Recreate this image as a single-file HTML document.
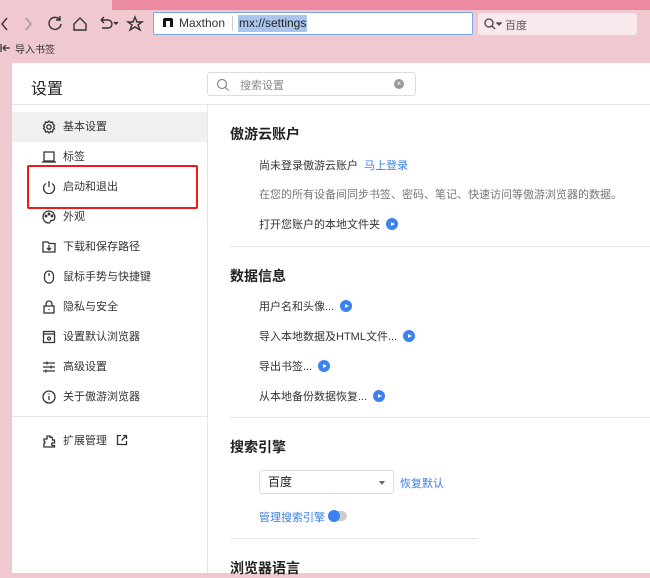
<!DOCTYPE html>
<html><head><meta charset="utf-8"><style>
*{margin:0;padding:0;box-sizing:border-box}
body{width:650px;height:573px;overflow:hidden;background:#f0c8cf;font-family:"Liberation Sans","Noto Sans CJK SC",sans-serif;position:relative;color:#222}
.a{position:absolute}
.page{left:12px;top:63px;width:638px;height:510px;background:#fff}
.side .it{position:absolute;left:0;width:195px;height:30px;font-size:11px;line-height:30px;padding-left:51px;color:#333}
.side svg{position:absolute;left:30px;top:8px}
.h{font-size:14px;font-weight:bold;color:#222;left:230px}
.t{font-size:11px;color:#333;left:259px}
.g{color:#777}
.blue{color:#3b7fe0}
.play{display:inline-block;width:12px;height:12px;border-radius:50%;background:#3b82f0;vertical-align:-2px;margin-left:6px;position:relative}
.play:after{content:"";position:absolute;left:5px;top:3.5px;border-left:4px solid #fff;border-top:2.5px solid transparent;border-bottom:2.5px solid transparent}
.hr{height:1px;background:#e6e6e6}
</style></head><body>
<div class="a" style="left:112px;top:0;width:538px;height:10px;background:#eb8aa1"></div>
<svg class="a" style="left:0;top:12px" width="150" height="24" fill="none" stroke="#333" stroke-width="1.4">
<path d="M7 6l-5 6 5 6"/>
<path d="M26 6l5 6-5 6" stroke="#999"/>
<path d="M60 8a6 6 0 1 0 1 4M60 4v4h-4"/>
<path d="M74 12l6-6 6 6v6h-12z"/>
<path d="M101 8h7a4 4 0 0 1 0 8h-6M101 8l3-3M101 8l3 3"/>
<path d="M114 10l2 2 2-2" fill="#333"/>
<path d="M135 5l2 5h5l-4 3 2 5-5-3-5 3 2-5-4-3h5z"/>
</svg>
<div class="a" style="left:153px;top:12px;width:320px;height:23px;background:#fff;border:1px solid #7aa7e8;border-radius:2px"></div>
<div class="a" style="left:163px;top:18px;width:10px;height:9px;background:#111;border-radius:2px 2px 0 0"></div>
<div class="a" style="left:166px;top:21px;width:4px;height:6px;background:#fff"></div>
<div class="a" style="left:179px;top:16px;font-size:12px;color:#333">Maxthon</div>
<div class="a" style="left:232px;top:16px;width:1px;height:15px;background:#ccc"></div>
<div class="a" style="left:238px;top:15px;font-size:12px;color:#222;background:#a9c5ee;padding:1px 1px;line-height:15px">mx://settings</div>
<div class="a" style="left:478px;top:13px;width:159px;height:22px;background:#f9e9ec;border-radius:3px"></div>
<svg class="a" style="left:484px;top:17px" width="20" height="14" fill="none" stroke="#444" stroke-width="1.3"><circle cx="5" cy="6" r="4"/><path d="M8 9l3 3"/><path d="M13 6h4l-2 2z" fill="#444"/></svg>
<div class="a" style="left:505px;top:17px;font-size:11px;color:#555">百度</div>
<svg class="a" style="left:0;top:42px" width="12" height="12" fill="none" stroke="#333" stroke-width="1.2"><path d="M1 2v8M3 6h7M6 3l-3 3 3 3"/></svg>
<div class="a" style="left:15px;top:41px;font-size:10px;color:#333">导入书签</div>

<div class="a page"></div>
<div class="a" style="left:31px;top:75px;font-size:16px;color:#222">设置</div>
<div class="a" style="left:207px;top:72px;width:209px;height:24px;border:1px solid #ddd;border-radius:3px;background:#fff"></div>
<svg class="a" style="left:216px;top:78px" width="14" height="14" fill="none" stroke="#888" stroke-width="1.2"><circle cx="6" cy="6" r="4.5"/><path d="M9.5 9.5l3 3"/></svg>
<div class="a" style="left:240px;top:77px;font-size:11px;color:#888">搜索设置</div>
<div class="a" style="left:394px;top:79px;width:10px;height:10px;border-radius:50%;background:#999;color:#fff;font-size:8px;line-height:10px;text-align:center">×</div>
<div class="a" style="left:12px;top:104px;width:638px;height:1px;background:#e6e6e6"></div>
<div class="a" style="left:207px;top:104px;width:1px;height:469px;background:#e6e6e6"></div>

<div class="a side" style="left:12px;top:112px;width:195px;height:360px">
<div class="it" style="top:0;background:#f0f0f0"><svg width="14" height="14" fill="none" stroke="#333" stroke-width="1.3"><circle cx="7" cy="7" r="2.2"/><path d="M7 1l1.5 1.5 2-.5.5 2 1.5 1.5-1 1.5 1 1.5-1.5 1.5-.5 2-2-.5L7 13l-1.5-1.5-2 .5-.5-2L1.5 8.5 2.5 7l-1-1.5L3 4l.5-2 2 .5z"/></svg>基本设置</div>
<div class="it" style="top:30px"><svg width="14" height="14" fill="none" stroke="#333" stroke-width="1.3"><path d="M2 2h10v9H2zM0 12h14"/></svg>标签</div>
<div class="it" style="top:60px"><svg width="14" height="14" fill="none" stroke="#333" stroke-width="1.3"><path d="M4 3.5a5.5 5.5 0 1 0 6 0M7 1v6"/></svg>启动和退出</div>
<div class="it" style="top:90px"><svg width="14" height="14" fill="none" stroke="#333" stroke-width="1.3"><path d="M7 1a6 6 0 1 0 0 12c1.5 0 1-2 2-2.5s3 .5 3.5-1.5A6 6 0 0 0 7 1z"/><circle cx="4" cy="6" r=".8"/><circle cx="7" cy="4" r=".8"/><circle cx="10" cy="6" r=".8"/></svg>外观</div>
<div class="it" style="top:120px"><svg width="14" height="14" fill="none" stroke="#333" stroke-width="1.3"><path d="M1 2h5l1 1.5h6V12H1zM7 5v5M5 8l2 2 2-2"/></svg>下载和保存路径</div>
<div class="it" style="top:150px"><svg width="14" height="14" fill="none" stroke="#333" stroke-width="1.3"><rect x="2.5" y="1" width="9" height="12" rx="4.5"/><path d="M7 3v3"/></svg>鼠标手势与快捷键</div>
<div class="it" style="top:180px"><svg width="14" height="14" fill="none" stroke="#333" stroke-width="1.3"><rect x="2" y="6" width="10" height="7"/><path d="M4 6V4a3 3 0 0 1 6 0v2M7 9v1"/></svg>隐私与安全</div>
<div class="it" style="top:210px"><svg width="14" height="14" fill="none" stroke="#333" stroke-width="1.3"><rect x="1.5" y="1.5" width="11" height="11"/><path d="M1.5 4h11"/><circle cx="7" cy="8.5" r="1.5"/></svg>设置默认浏览器</div>
<div class="it" style="top:240px"><svg width="14" height="14" fill="none" stroke="#333" stroke-width="1.3"><path d="M1 3h12M1 7h12M1 11h12M5 1.5v3M9 5.5v3M4 9.5v3"/></svg>高级设置</div>
<div class="it" style="top:270px"><svg width="14" height="14" fill="none" stroke="#333" stroke-width="1.3"><circle cx="7" cy="7" r="6"/><path d="M7 6v4M7 3.5v1"/></svg>关于傲游浏览器</div>
<div style="position:absolute;left:0;top:304px;width:195px;height:1px;background:#e6e6e6"></div>
<div class="it" style="top:314px"><svg width="14" height="14" fill="none" stroke="#333" stroke-width="1.3"><path d="M5 2h3v2a1.3 1.3 0 0 1 2.5 0V6h2v3h-2a1.3 1.3 0 0 0 0 2.5h2V13H2V9.5a1.3 1.3 0 0 0 0-2.5V5h3z"/></svg>扩展管理<svg style="left:104px" width="12" height="12" fill="none" stroke="#333" stroke-width="1.3"><path d="M5 1.5H1.5v9h9V7M7 1.5h3.5V5M10.5 1.5L5.5 6.5"/></svg></div>
</div>
<div class="a" style="left:27px;top:165px;width:171px;height:44px;border:2px solid #f01818;border-radius:2px"></div>

<div class="a h" style="top:124px">傲游云账户</div>
<div class="a t" style="top:157px">尚未登录傲游云账户&nbsp;&nbsp;<span class="blue">马上登录</span></div>
<div class="a t g" style="top:186px">在您的所有设备间同步书签、密码、笔记、快速访问等傲游浏览器的数据。</div>
<div class="a t" style="top:216px">打开您账户的本地文件夹<span class="play"></span></div>
<div class="a hr" style="left:230px;top:246px;width:420px"></div>
<div class="a h" style="top:266px">数据信息</div>
<div class="a t" style="top:298px">用户名和头像...<span class="play"></span></div>
<div class="a t" style="top:328px">导入本地数据及HTML文件...<span class="play"></span></div>
<div class="a t" style="top:358px">导出书签...<span class="play"></span></div>
<div class="a t" style="top:388px">从本地备份数据恢复...<span class="play"></span></div>
<div class="a hr" style="left:230px;top:417px;width:420px"></div>
<div class="a h" style="top:437px">搜索引擎</div>
<div class="a" style="left:259px;top:470px;width:135px;height:24px;border:1px solid #ddd;border-radius:3px;font-size:12px;line-height:22px;padding-left:8px;color:#222">百度<span style="position:absolute;right:8px;top:10px;border-top:4px solid #666;border-left:3.5px solid transparent;border-right:3.5px solid transparent"></span></div>
<div class="a t blue" style="left:400px;top:475px">恢复默认</div>
<div class="a t blue" style="top:509px">管理搜索引擎</div>
<div class="a" style="left:328px;top:511px;width:19px;height:10px;border-radius:5px;background:#ccc"></div>
<div class="a" style="left:328px;top:510px;width:12px;height:12px;border-radius:50%;background:#3b82f0"></div>
<div class="a hr" style="left:230px;top:538px;width:248px"></div>
<div class="a h" style="top:558px">浏览器语言</div>
</body></html>
